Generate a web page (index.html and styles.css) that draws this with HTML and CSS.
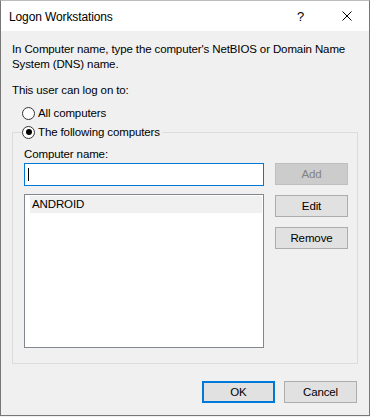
FILE: index.html
```html
<!DOCTYPE html>
<html lang="en">
<head>
    <meta charset="UTF-8">
    <title>Logon Workstations</title>
    <link rel="stylesheet" href="styles.css">
</head>
<body>

<div class="window">
    <div class="titlebar">
        <span class="title">Logon Workstations</span>
        <span class="help">?</span>
        <span class="close">
            <svg width="10" height="10" viewBox="0 0 10 10"><path d="M0.5 0.5 L9.5 9.5 M9.5 0.5 L0.5 9.5" stroke="#000" stroke-width="1" fill="none"/></svg>
        </span>
    </div>

    <div class="content">
        <p class="intro">In Computer name, type the computer's NetBIOS or Domain Name System (DNS) name.</p>
        <p class="label">This user can log on to:</p>

        <label class="radio"><span class="dot"></span>All computers</label>

        <fieldset class="group">
            <legend><label class="radio"><span class="dot checked"></span>The following computers</label></legend>
            <div class="group-grid">
                <div class="left">
                    <div class="field-label">Computer name:</div>
                    <div class="input"><span class="caret"></span></div>
                    <div class="listbox">
                        <div class="list-item">ANDROID</div>
                    </div>
                </div>
                <div class="right">
                    <div class="btn disabled">Add</div>
                    <div class="btn">Edit</div>
                    <div class="btn">Remove</div>
                </div>
            </div>
        </fieldset>

        <div class="footer">
            <div class="btn default">OK</div>
            <div class="btn">Cancel</div>
        </div>
    </div>
</div>

</body>
</html>
```

FILE: styles.css
```css
body {
    margin: 0;
    padding: 0;
    background-color: #f0f0f0;
    font-family: 'Liberation Sans', Arial, sans-serif;
    font-size: 11.5px;
    letter-spacing: -0.12px;
    color: #000;
}
.window {
    width: 370px;
    height: 416px;
    box-sizing: border-box;
    border: 1px solid #777;
    border-top-color: #bdbdbd;
    background-color: #f0f0f0;
}
.titlebar {
    height: 30px;
    background-color: #fff;
    display: flex;
    align-items: center;
}
.title {
    flex: 1;
    padding-left: 8px;
    padding-top: 1px;
    font-size: 12px;
}
.help {
    width: 8px;
    font-size: 13px;
    margin-right: 37px;
}
.close {
    display: flex;
    margin-right: 17px;
}
.content {
    padding: 11px 11px 0 11px;
}
p {
    margin: 0;
    line-height: 15px;
}
.intro {
    margin-bottom: 11px;
}
.label {
    margin-bottom: 6px;
}
.radio {
    display: flex;
    align-items: center;
    height: 18px;
    padding-left: 10px;
}
.dot {
    width: 11px;
    height: 11px;
    border: 1px solid #333;
    border-radius: 50%;
    background-color: #fff;
    margin-right: 3px;
    position: relative;
}
.dot.checked::after {
    content: '';
    position: absolute;
    left: 2.5px;
    top: 2.5px;
    width: 6px;
    height: 6px;
    border-radius: 50%;
    background-color: #000;
}
.group {
    margin: 1px 0 0 0;
    padding: 0 11px 15px 11px;
    border: 1px solid #dcdcdc;
    min-width: 0;
}
.group legend {
    padding: 0 2px 0 0;
    margin-left: -2px;
}
.group legend .radio {
    padding-left: 0;
}
.group-grid {
    display: grid;
    grid-template-columns: 240px 73px;
    column-gap: 11px;
}
.field-label {
    height: 15px;
    line-height: 15px;
    margin-top: 6px;
    margin-bottom: 1px;
}
.input {
    height: 23px;
    box-sizing: border-box;
    border: 1px solid #0078d7;
    background-color: #fff;
    position: relative;
}
.caret {
    position: absolute;
    left: 3px;
    top: 4px;
    width: 1px;
    height: 13px;
    background-color: #000;
}
.listbox {
    margin-top: 8px;
    height: 154px;
    box-sizing: border-box;
    border: 1px solid #828790;
    background-color: #fff;
    padding: 1px 1px 0 5px;
}
.list-item {
    height: 17px;
    line-height: 17px;
    background-color: #f0f0f0;
    padding-left: 2px;
}
.right {
    padding-top: 22px;
    display: flex;
    flex-direction: column;
    gap: 10px;
}
.btn {
    height: 22px;
    box-sizing: border-box;
    border: 1px solid #adadad;
    background-color: #e1e1e1;
    display: flex;
    align-items: center;
    justify-content: center;
    width: 73px;
}
.btn.disabled {
    background-color: #cccccc;
    border-color: #bfbfbf;
    color: #838383;
}
.btn.default {
    border: 2px solid #0078d7;
}
.footer {
    display: flex;
    justify-content: flex-end;
    gap: 9px;
    margin-top: 17px;
    padding-right: 1px;
}
```
